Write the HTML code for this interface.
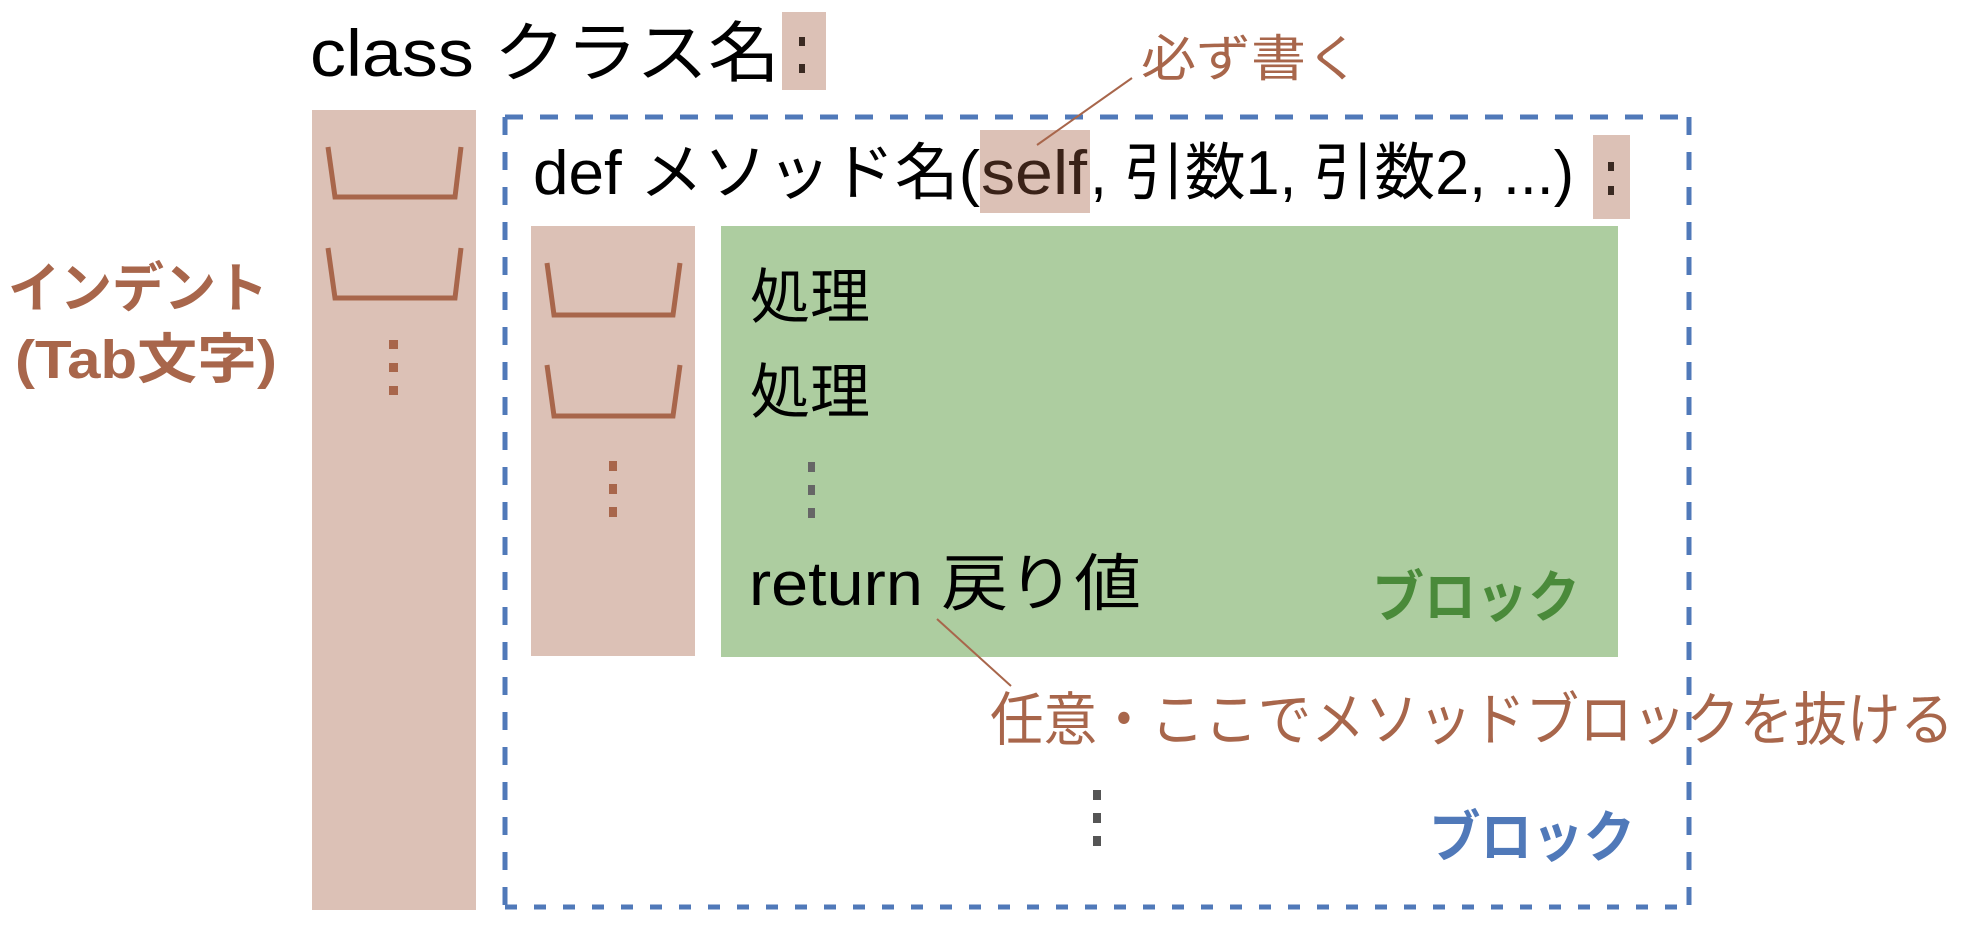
<!DOCTYPE html>
<html><head><meta charset="utf-8"><style>
html,body{margin:0;padding:0;background:#fff;}
svg{display:block;}
text{font-family:"Liberation Sans","Noto Sans CJK JP",sans-serif;}
</style></head><body>
<svg width="1962" height="928" viewBox="0 0 1962 928" xmlns="http://www.w3.org/2000/svg">
<rect x="782" y="12" width="44" height="78" fill="#dcc1b6"/>
<text x="310" y="76" font-size="66" fill="#000" textLength="470" lengthAdjust="spacingAndGlyphs">class クラス名</text>
<rect x="799" y="37" width="6" height="9" fill="#3a2a22"/>
<rect x="799" y="64" width="6" height="9" fill="#3a2a22"/>

<rect x="312" y="110" width="164" height="800" fill="#dcc1b6"/>
<path d="M328 147 L335 197 L455 197 L461 147" fill="none" stroke="#a8664b" stroke-width="5"/>
<path d="M328 248 L335 298 L455 298 L461 248" fill="none" stroke="#a8664b" stroke-width="5"/>
<rect x="389" y="340" width="9" height="9" fill="#a8664b"/>
<rect x="389" y="363" width="9" height="9" fill="#a8664b"/>
<rect x="389" y="386" width="9" height="9" fill="#a8664b"/>

<text x="8" y="307" font-size="54" font-weight="bold" fill="#a8664b" textLength="260" lengthAdjust="spacingAndGlyphs">インデント</text>
<text x="15" y="378" font-size="54" font-weight="bold" fill="#a8664b" textLength="262" lengthAdjust="spacingAndGlyphs">(Tab文字)</text>

<g stroke="#5079b9" stroke-width="5" fill="none">
<line x1="505" y1="117" x2="1689" y2="117" stroke-dasharray="18 17"/>
<line x1="505" y1="907" x2="1689" y2="907" stroke-dasharray="12 17"/>
<line x1="505" y1="117" x2="505" y2="907" stroke-dasharray="18 17"/>
<line x1="1689" y1="117" x2="1689" y2="907" stroke-dasharray="18 17"/>
</g>

<rect x="980" y="130" width="110" height="83" fill="#dcc1b6"/>
<rect x="1593" y="135" width="37" height="84" fill="#dcc1b6"/>
<text x="533" y="194" font-size="62" fill="#000" textLength="447" lengthAdjust="spacingAndGlyphs">def メソッド名(</text>
<text x="981" y="194" font-size="62" fill="#3a2218" textLength="106" lengthAdjust="spacingAndGlyphs">self</text>
<text x="1090" y="194" font-size="62" fill="#000" textLength="484" lengthAdjust="spacingAndGlyphs">, 引数1, 引数2, ...)</text>
<rect x="1608" y="162" width="6" height="9" fill="#3a2a22"/>
<rect x="1608" y="186" width="6" height="9" fill="#3a2a22"/>

<text x="1141" y="76" font-size="50" fill="#a8664b" textLength="220" lengthAdjust="spacingAndGlyphs">必ず書く</text>
<line x1="1132" y1="78" x2="1037" y2="145" stroke="#a8664b" stroke-width="2"/>

<rect x="531" y="226" width="164" height="430" fill="#dcc1b6"/>
<path d="M547 263 L554 315 L673 315 L680 263" fill="none" stroke="#a8664b" stroke-width="5"/>
<path d="M547 365 L554 416 L673 416 L680 365" fill="none" stroke="#a8664b" stroke-width="5"/>
<rect x="609" y="461" width="8" height="10" fill="#a8664b"/>
<rect x="609" y="484" width="8" height="10" fill="#a8664b"/>
<rect x="609" y="507" width="8" height="10" fill="#a8664b"/>

<rect x="721" y="226" width="897" height="431" fill="#adcda0"/>
<text x="750" y="318" font-size="60" fill="#000" textLength="120" lengthAdjust="spacingAndGlyphs">処理</text>
<text x="750" y="413" font-size="60" fill="#000" textLength="120" lengthAdjust="spacingAndGlyphs">処理</text>
<rect x="808" y="462" width="7" height="10" fill="#666"/>
<rect x="808" y="485" width="7" height="10" fill="#666"/>
<rect x="808" y="508" width="7" height="10" fill="#666"/>
<text x="749" y="605" font-size="62" fill="#000" textLength="392" lengthAdjust="spacingAndGlyphs">return 戻り値</text>
<text x="1372" y="617" font-size="56" font-weight="bold" fill="#4a8a3a" textLength="208" lengthAdjust="spacingAndGlyphs">ブロック</text>

<line x1="937" y1="619" x2="1011" y2="686" stroke="#a8664b" stroke-width="2"/>
<text x="990" y="740" font-size="58" fill="#a8664b" textLength="964" lengthAdjust="spacingAndGlyphs">任意・ここでメソッドブロックを抜ける</text>

<rect x="1093" y="790" width="8" height="10" fill="#555"/>
<rect x="1093" y="813" width="8" height="10" fill="#555"/>
<rect x="1093" y="836" width="8" height="10" fill="#555"/>
<text x="1429" y="857" font-size="56" font-weight="bold" fill="#5079b9" textLength="206" lengthAdjust="spacingAndGlyphs">ブロック</text>
</svg>
</body></html>
